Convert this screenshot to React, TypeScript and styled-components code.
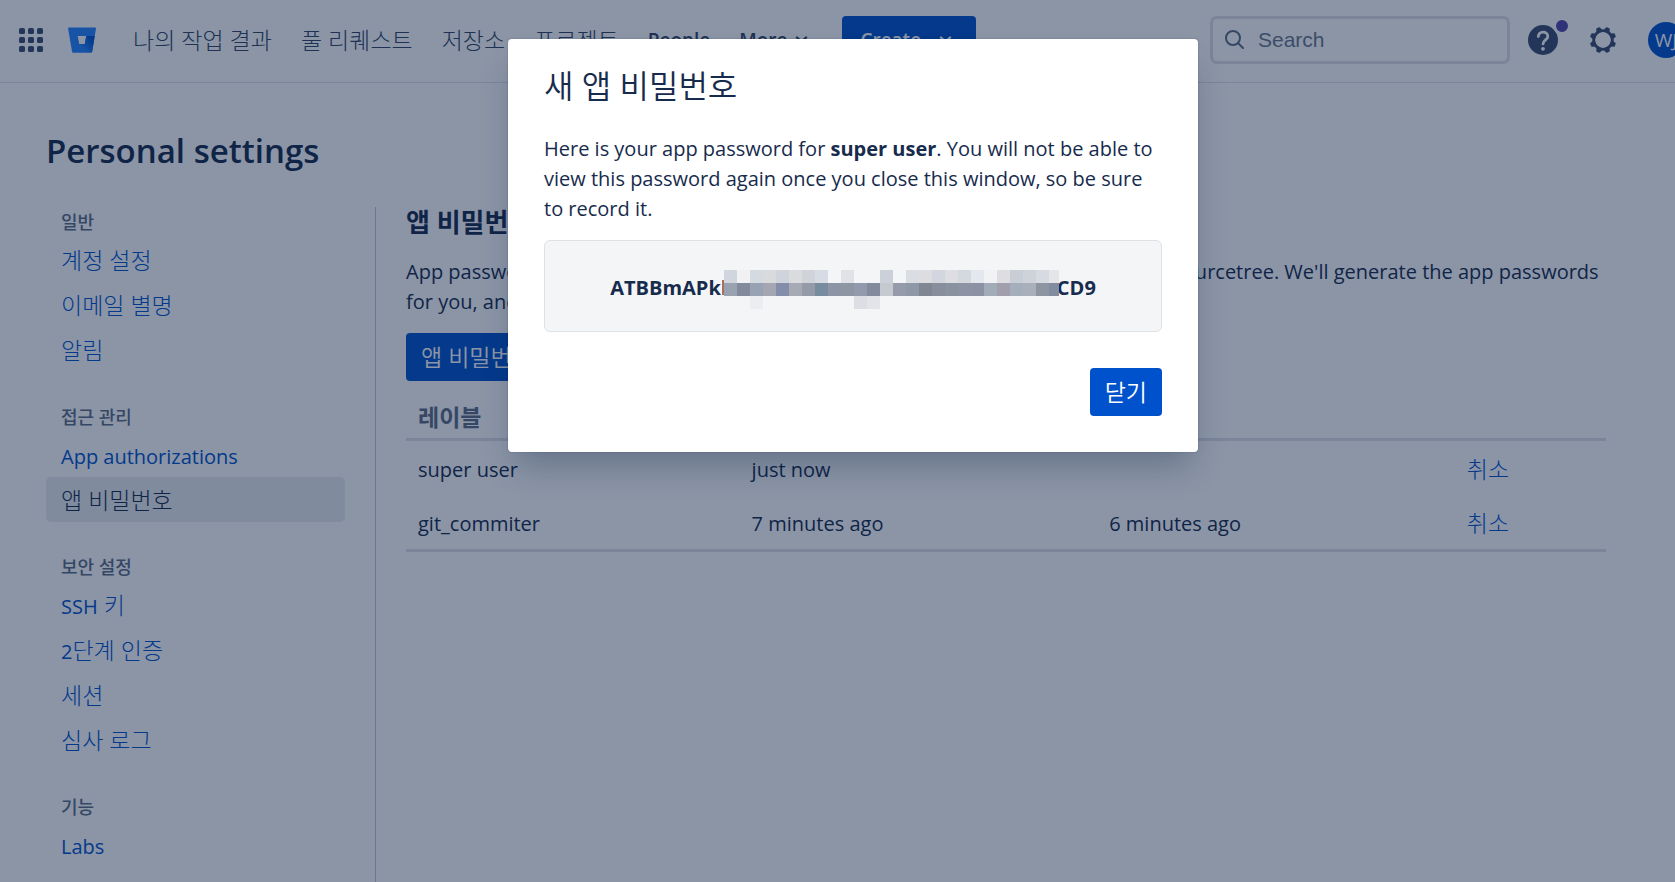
import React from 'react';
import styled, { createGlobalStyle } from 'styled-components';

const latin = `'Open Sans', 'Noto Sans CJK KR', sans-serif`;

const GlobalStyle = createGlobalStyle`
  * { box-sizing: border-box; }
  body {
    margin: 0;
    background: #fff;
    color: #172b4d;
    font-family: ${latin};
    font-size: 20px;
    line-height: 30px;
  }
  h1, h2, h3, p, ul { margin: 0; padding: 0; }
  ul { list-style: none; }
  button, input { font: inherit; }
  a { text-decoration: none; }
`;

const Viewport = styled.div`
  overflow: hidden;
`;

/* The page is a little wider than the window, so its right edge is cut off. */
const Page = styled.div`
  position: relative;
  display: flex;
  flex-direction: column;
  width: calc(100% + 31px);
  min-height: 100vh;
`;

const NavBar = styled.header`
  display: flex;
  align-items: center;
  height: 83px;
  padding: 0 22px 3px 19px;
  border-bottom: 1px solid #dfe1e6;
  color: #344563;
`;

const IconButton = styled.button<{ $size: number }>`
  position: relative;
  display: flex;
  align-items: center;
  justify-content: center;
  flex: none;
  width: ${(p) => p.$size}px;
  height: ${(p) => p.$size}px;
  padding: 0;
  border: 0;
  border-radius: 50%;
  background: none;
  color: #3b4c70;
`;

const HomeLink = styled.a`
  display: flex;
  margin-left: 25px;
`;

const NavList = styled.nav`
  display: flex;
  align-items: center;
  gap: 29px;
  margin-left: 37px;
  white-space: nowrap;
`;

const NavLink = styled.a<{ $strong?: boolean }>`
  display: flex;
  align-items: center;
  gap: 8px;
  color: inherit;
  font-size: ${(p) => (p.$strong ? 19 : 23)}px;
  font-weight: ${(p) => (p.$strong ? 600 : 300)};
`;

const Button = styled.button`
  display: inline-flex;
  align-items: center;
  gap: 18px;
  height: 48px;
  padding: 0 15px;
  border: 0;
  border-radius: 4px;
  background: #0052cc;
  color: #fff;
  font-size: 23px;
  font-weight: 350;
  white-space: nowrap;
`;

const CreateButton = styled(Button)`
  margin-left: 34px;
  padding: 0 24px 0 18px;
  font-size: 19px;
  font-weight: 600;
`;

const NavTools = styled.div`
  display: flex;
  align-items: center;
  margin-left: auto;
`;

const SearchBox = styled.label`
  display: flex;
  align-items: center;
  gap: 14px;
  width: 300px;
  height: 48px;
  padding: 0 12px;
  border: 3px solid #dfe1e6;
  border-radius: 7px;
  color: #5e6c84;
`;

const SearchInput = styled.input`
  flex: 1;
  min-width: 0;
  padding: 0;
  border: 0;
  outline: 0;
  background: none;
  color: inherit;
  font-family: 'Liberation Sans', Arial, sans-serif;
  font-size: 21px;
  &::placeholder { color: #6b778c; opacity: 1; }
`;

const ToolIcons = styled.div`
  display: flex;
  align-items: center;
  gap: 12px;
  margin: 0 21px 0 9px;
`;

const Badge = styled.span`
  position: absolute;
  top: 1px;
  right: -4px;
  width: 18px;
  height: 18px;
  border: 3px solid #fff;
  border-radius: 50%;
  background: #5243aa;
`;

const Avatar = styled.button`
  flex: none;
  width: 36px;
  height: 36px;
  padding: 0;
  border: 0;
  border-radius: 50%;
  background: #0052cc;
  color: #fff;
  font-size: 19px;
  font-weight: 400;
`;

const Body = styled.main`
  display: flex;
  flex-direction: column;
  flex: 1;
  padding: 44px 100px 0 46px;
`;

const PageTitle = styled.h1`
  margin-bottom: 32px;
  font-size: 33px;
  font-weight: 600;
  line-height: 48px;
`;

const Columns = styled.div`
  display: flex;
  flex: 1;
`;

const Sidebar = styled.nav`
  flex: none;
  width: 330px;
  padding-right: 30px;
  border-right: 1px solid #c1c7d0;
`;

const MenuHeading = styled.h3`
  padding-left: 15px;
  color: #5e6c84;
  font-size: 18px;
  font-weight: 500;
  line-height: 30px;
`;

const MenuGroup = styled.section`
  & + & { padding-top: 30px; }
`;

const MenuLink = styled.a<{ $active?: boolean; $latin?: boolean }>`
  display: block;
  height: 45px;
  padding-left: 15px;
  border-radius: 5px;
  background: ${(p) => (p.$active ? '#ebecf0' : 'none')};
  color: ${(p) => (p.$active ? '#172b4d' : '#0052cc')};
  font-size: ${(p) => (p.$latin ? 20 : 23)}px;
  font-weight: ${(p) => (p.$latin ? 400 : 300)};
  line-height: ${(p) => (p.$latin ? 49 : 46)}px;
`;

const Latin = styled.span`
  font-size: 20px;
  font-weight: 400;
`;

const Content = styled.section`
  flex: 1;
  min-width: 0;
  padding-left: 30px;
`;

const SectionTitle = styled.h2`
  margin-bottom: 20px;
  font-size: 26px;
  font-weight: 700;
  line-height: 30px;
`;

const Intro = styled.p`
  margin-bottom: 16px;
`;

const Table = styled.table`
  width: 100%;
  margin-top: 15px;
  border-collapse: separate;
  border-spacing: 0;
  table-layout: fixed;
  border-bottom: 3px solid #dfe1e6;
`;

const HeadCell = styled.th<{ $width: string }>`
  width: ${(p) => p.$width};
  height: 45px;
  padding: 0 12px;
  border-bottom: 3px solid #dfe1e6;
  color: #5e6c84;
  font-size: 23px;
  font-weight: 700;
  text-align: left;
`;

const Cell = styled.td`
  height: 54px;
  padding: 3px 12px 0;
`;

const RevokeLink = styled.a`
  color: #0052cc;
  font-size: 23px;
  font-weight: 300;
`;

const Blanket = styled.div`
  position: absolute;
  inset: 0;
  display: flex;
  justify-content: center;
  align-items: flex-start;
  padding-top: 39px;
  background: rgba(9, 30, 66, 0.47);
`;

const Dialog = styled.section`
  width: 690px;
  padding: 24px 36px 36px;
  border-radius: 4px;
  background: #fff;
  box-shadow: 0 20px 32px -8px rgba(9, 30, 66, 0.3), 0 0 2px rgba(9, 30, 66, 0.25);
`;

const DialogTitle = styled.h2`
  margin-bottom: 26px;
  font-size: 32px;
  font-weight: 350;
  line-height: 45px;
`;

const PasswordBox = styled.div`
  display: flex;
  align-items: center;
  justify-content: center;
  height: 92px;
  margin: 16px 0 36px;
  padding-top: 3px;
  border: 1px solid #dfe1e6;
  border-radius: 6px;
  background: #f4f5f7;
  font-weight: 700;
`;

const Mosaic = styled.svg`
  flex: none;
  margin: 3px -2px 0 1px;
  z-index: 1;
`;

const DialogActions = styled.footer`
  display: flex;
  justify-content: flex-end;
`;

const mosaicRows: string[][] = [
  'd0d5de f1f1f3 d5dae0 d9dade cfd3db d9dbdf d1d3da d7dbe3 - e0e2e7 - - ccd0d9 - dadde2 dddde1 d3d6de dedee2 d4d8df e4e7ed f1f2f4 dddde2 c8cdd6 ced2da d6dae1 e4e5e8'.split(' '),
  '98a2b1 838a9c 97a3b2 a4a6b2 838faa a6aab5 949aa8 778d9f 8c94a5 8f96a3 929bae 828a9c c5cad1 959baa 8e98a6 808793 888e9c 8a92a0 8d93a3 8c92a3 a2acb9 a09fab a5afbb a9afbb 8e95a2 818ca0'.split(' '),
  '- - ecedf1 - - - - - - - dddee3 e3e4e8'.split(' '),
];
const CELL = 13;

const Redaction = () => (
  <Mosaic width="337" height="39" viewBox="0 0 337 39" aria-hidden="true" shapeRendering="crispEdges">
    <rect x="0" y="10" width="2" height="15" fill="#a9705f" />
    {mosaicRows.map((row, y) =>
      row.map((c, x) =>
        c === '-' ? null : (
          <rect key={`${x}-${y}`} x={2 + x * CELL} y={y * CELL} width={CELL} height={CELL} fill={`#${c}`} />
        ),
      ),
    )}
  </Mosaic>
);

const AppsIcon = () => (
  <svg width="24" height="24" viewBox="0 0 24 24" fill="currentColor" aria-hidden="true">
    {[0, 9, 18].map((y) => [0, 9, 18].map((x) => <rect key={`${x}-${y}`} x={x} y={y} width="6" height="6" rx="1.6" />))}
  </svg>
);

const BucketLogo = () => (
  <svg width="28" height="26" viewBox="0 0 28 26" aria-hidden="true">
    <defs>
      <linearGradient id="bucketShade" x1="27" y1="10" x2="14" y2="20" gradientUnits="userSpaceOnUse">
        <stop offset="0.2" stopColor="#0052cc" />
        <stop offset="1" stopColor="#2684ff" />
      </linearGradient>
    </defs>
    <path fill="#2684ff" fillRule="evenodd" d="M1 .5A.9.9 0 0 0 .1 1.6L4 24.6c.1.6.6 1 1.2 1h18c.5 0 .8-.3.9-.8L28 1.6A.9.9 0 0 0 27.100 .5ZM16.800 17h-5.600L9.700 9h8.500Z" />
    <path fill="url(#bucketShade)" d="M26.700 9h-8.500l-1.400 8h-5.600l-6.700 8.300c.2.2.5.3.8.3h18c.5 0 .8-.3.9-.8Z" />
  </svg>
);

const Chevron = () => (
  <svg width="13" height="8" viewBox="0 0 13 8" fill="none" stroke="currentColor" strokeWidth="2.4" strokeLinecap="round" strokeLinejoin="round" aria-hidden="true">
    <path d="M2 1.500 6.500 6 11 1.500" />
  </svg>
);

const SearchIcon = () => (
  <svg width="19" height="19" viewBox="0 0 19 19" fill="none" stroke="currentColor" strokeWidth="2" strokeLinecap="round" aria-hidden="true">
    <circle cx="8" cy="8" r="7" />
    <path d="m13 13 5 5" />
  </svg>
);

const HelpIcon = () => (
  <svg width="30" height="30" viewBox="0 0 30 30" aria-hidden="true">
    <circle cx="15" cy="15" r="15" fill="currentColor" />
    <path d="M10.300 11.600c0-2.800 2-4.400 4.700-4.400s4.800 1.600 4.800 4.200c0 3.400-4.800 3.500-4.800 7.500" fill="none" stroke="#fff" strokeWidth="2.800" strokeLinecap="round" />
    <circle cx="15" cy="23.800" r="1.900" fill="#fff" />
  </svg>
);

const GearIcon = () => (
  <svg width="28" height="28" viewBox="0 0 28 28" fill="currentColor" aria-hidden="true">
    {[0, 1, 2, 3, 4, 5, 6, 7].map((i) => (
      <path key={i} d="M10.600 6 11.800 1.600Q12 .8 12.800 .8H15.200Q16 .8 16.200 1.600L17.400 6Z" transform={`rotate(${22.5 + i * 45} 14 14)`} />
    ))}
    <circle cx="14" cy="14" r="9.300" fill="none" stroke="currentColor" strokeWidth="2.800" />
  </svg>
);

type MenuItem = { label: React.ReactNode; latin?: boolean; active?: boolean };

const menu: { title: string; items: MenuItem[] }[] = [
  { title: '일반', items: [{ label: '계정 설정' }, { label: '이메일 별명' }, { label: '알림' }] },
  { title: '접근 관리', items: [{ label: 'App authorizations', latin: true }, { label: '앱 비밀번호', active: true }] },
  {
    title: '보안 설정',
    items: [
      { label: <><Latin>SSH</Latin> 키</> },
      { label: <><Latin>2</Latin>단계 인증</> },
      { label: '세션' },
      { label: '심사 로그' },
    ],
  },
  { title: '기능', items: [{ label: 'Labs', latin: true }] },
];

const passwords = [
  { label: 'super user', created: 'just now', used: '' },
  { label: 'git_commiter', created: '7 minutes ago', used: '6 minutes ago' },
];

export default function App() {
  return (
    <Viewport>
      <GlobalStyle />
      <Page>
        <NavBar>
          <IconButton $size={24} aria-label="Switch to"><AppsIcon /></IconButton>
          <HomeLink href="#" aria-label="Bitbucket"><BucketLogo /></HomeLink>
          <NavList>
            <NavLink href="#">나의 작업 결과</NavLink>
            <NavLink href="#">풀 리퀘스트</NavLink>
            <NavLink href="#">저장소</NavLink>
            <NavLink href="#">프로젝트</NavLink>
            <NavLink href="#" $strong>People</NavLink>
            <NavLink href="#" $strong>More <Chevron /></NavLink>
          </NavList>
          <CreateButton>Create <Chevron /></CreateButton>
          <NavTools>
            <SearchBox>
              <SearchIcon />
              <SearchInput type="text" placeholder="Search" aria-label="Search" />
            </SearchBox>
            <ToolIcons>
              <IconButton $size={48} aria-label="Help"><HelpIcon /><Badge /></IconButton>
              <IconButton $size={48} aria-label="Settings"><GearIcon /></IconButton>
            </ToolIcons>
            <Avatar aria-label="Your profile">WJ</Avatar>
          </NavTools>
        </NavBar>

        <Body>
          <PageTitle>Personal settings</PageTitle>
          <Columns>
            <Sidebar>
              {menu.map((group) => (
                <MenuGroup key={group.title}>
                  <MenuHeading>{group.title}</MenuHeading>
                  <ul>
                    {group.items.map((item, i) => (
                      <li key={i}>
                        <MenuLink href="#" $active={item.active} $latin={item.latin}>{item.label}</MenuLink>
                      </li>
                    ))}
                  </ul>
                </MenuGroup>
              ))}
            </Sidebar>
            <Content>
              <SectionTitle>앱 비밀번호</SectionTitle>
              <Intro>
                App passwords allow you to make API calls to your Bitbucket account via apps like
                Sourcetree. We'll generate the app passwords for you, and you won't need to remember them.
              </Intro>
              <Button>앱 비밀번호 만들기</Button>
              <Table>
                <thead>
                  <tr>
                    <HeadCell $width="27.8%">레이블</HeadCell>
                    <HeadCell $width="29.8%">생성됨</HeadCell>
                    <HeadCell $width="29.8%">액세스</HeadCell>
                    <HeadCell $width="12.6%" aria-label="작업" />
                  </tr>
                </thead>
                <tbody>
                  {passwords.map((row) => (
                    <tr key={row.label}>
                      <Cell>{row.label}</Cell>
                      <Cell>{row.created}</Cell>
                      <Cell>{row.used}</Cell>
                      <Cell><RevokeLink href="#">취소</RevokeLink></Cell>
                    </tr>
                  ))}
                </tbody>
              </Table>
            </Content>
          </Columns>
        </Body>

        <Blanket>
          <Dialog role="dialog" aria-modal="true" aria-labelledby="dialog-title">
            <DialogTitle id="dialog-title">새 앱 비밀번호</DialogTitle>
            <p>
              Here is your app password for <strong>super user</strong>. You will not be able to view this
              password again once you close this window, so be sure to record it.
            </p>
            <PasswordBox>
              <span>ATBBmAPk</span>
              <Redaction />
              <span>CD9</span>
            </PasswordBox>
            <DialogActions>
              <Button>닫기</Button>
            </DialogActions>
          </Dialog>
        </Blanket>
      </Page>
    </Viewport>
  );
}
